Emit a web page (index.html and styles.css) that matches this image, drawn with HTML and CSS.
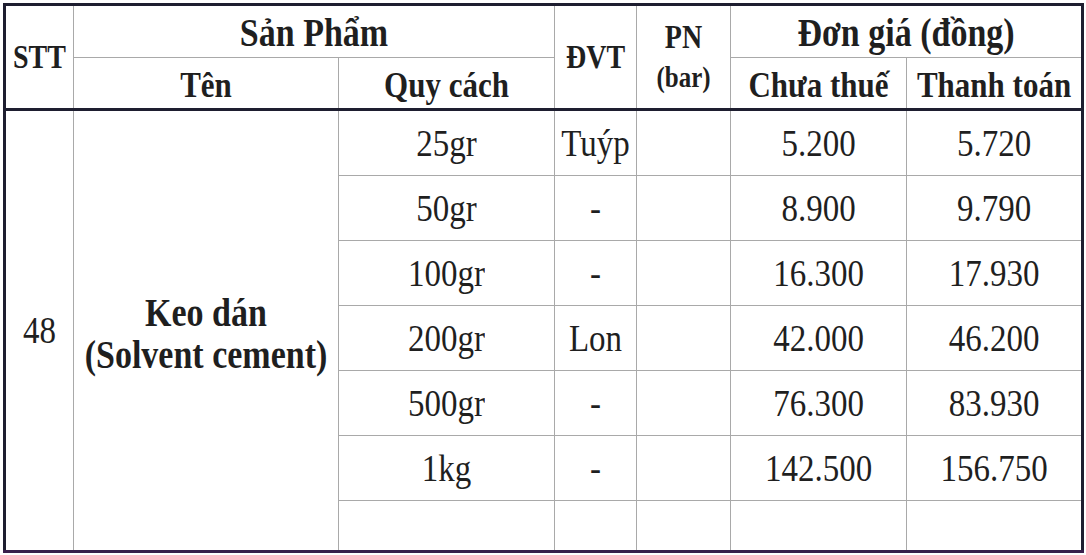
FILE: index.html
```html
<!DOCTYPE html>
<html lang="vi">
<head>
<meta charset="utf-8">
<title>Bảng giá Keo dán</title>
<link rel="stylesheet" href="styles.css">
</head>
<body>
<div class="sheet">
<table class="price">
  <colgroup>
    <col class="c-stt"><col class="c-ten"><col class="c-qc"><col class="c-dvt"><col class="c-pn"><col class="c-gia"><col class="c-gia">
  </colgroup>
  <thead>
    <tr class="h1">
      <th rowspan="2" class="small thick-b"><span class="t">STT</span></th>
      <th colspan="2"><span class="t">Sản Phẩm</span></th>
      <th rowspan="2" class="small thick-b"><span class="t">ĐVT</span></th>
      <th rowspan="2" class="small thick-b"><span class="t pn">PN<br><span class="bar">(bar)</span></span></th>
      <th colspan="2"><span class="t">Đơn giá (đồng)</span></th>
    </tr>
    <tr class="h2">
      <th class="thick-b"><span class="t">Tên</span></th>
      <th class="thick-b"><span class="t">Quy cách</span></th>
      <th class="thick-b"><span class="t">Chưa thuế</span></th>
      <th class="thick-b"><span class="t">Thanh toán</span></th>
    </tr>
  </thead>
  <tbody>
    <tr>
      <td rowspan="7"><span class="t">48</span></td>
      <td rowspan="7" class="name"><span class="t">Keo dán<br>(Solvent cement)</span></td>
      <td><span class="t">25gr</span></td>
      <td><span class="t">Tuýp</span></td>
      <td></td>
      <td><span class="t">5.200</span></td>
      <td><span class="t">5.720</span></td>
    </tr>
    <tr>
      <td><span class="t">50gr</span></td>
      <td><span class="t">-</span></td>
      <td></td>
      <td><span class="t">8.900</span></td>
      <td><span class="t">9.790</span></td>
    </tr>
    <tr>
      <td><span class="t">100gr</span></td>
      <td><span class="t">-</span></td>
      <td></td>
      <td><span class="t">16.300</span></td>
      <td><span class="t">17.930</span></td>
    </tr>
    <tr>
      <td><span class="t">200gr</span></td>
      <td><span class="t">Lon</span></td>
      <td></td>
      <td><span class="t">42.000</span></td>
      <td><span class="t">46.200</span></td>
    </tr>
    <tr>
      <td><span class="t">500gr</span></td>
      <td><span class="t">-</span></td>
      <td></td>
      <td><span class="t">76.300</span></td>
      <td><span class="t">83.930</span></td>
    </tr>
    <tr>
      <td><span class="t">1kg</span></td>
      <td><span class="t">-</span></td>
      <td></td>
      <td><span class="t">142.500</span></td>
      <td><span class="t">156.750</span></td>
    </tr>
    <tr class="last">
      <td></td>
      <td></td>
      <td></td>
      <td></td>
      <td></td>
    </tr>
  </tbody>
</table>
</div>
</body>
</html>
```
FILE: styles.css
```css
html, body {
  margin: 0;
  padding: 0;
  background: #ffffff;
}

.sheet {
  padding: 3px 0 0 3px;
}

.price {
  border-collapse: collapse;
  table-layout: fixed;
  width: 1080px;
  font-family: "Liberation Serif", "Times New Roman", serif;
  color: #1f1f1f;
  border-top: 3px solid #1e1e30;
  border-left: 3px solid #1e1e30;
  border-right: 3px solid #1e1e30;
  border-bottom: 3px solid #3a1f4c;
}

.c-stt { width: 69px; }
.c-ten { width: 265px; }
.c-qc { width: 216px; }
.c-dvt { width: 82px; }
.c-pn { width: 94px; }
.c-gia { width: 176px; }

.price th,
.price td {
  border: 1px solid #a9a9a9;
  padding: 0;
  text-align: center;
  vertical-align: middle;
  overflow: hidden;
}

.price th {
  font-weight: bold;
}

.h1 th {
  height: 48px;
  font-size: 34px;
  padding-top: 3px;
}

.h2 th {
  height: 47px;
  font-size: 31px;
  padding-top: 3px;
}

.price th.small {
  font-size: 28px;
  padding-top: 0;
}

.price th.thick-b {
  border-bottom: 3px solid #1e1e30;
}

.t {
  display: inline-block;
  line-height: 1;
  transform: scaleY(1.17);
}

.pn {
  line-height: 34px;
}

.bar {
  font-size: 25px;
}

.price td {
  height: 64px;
  font-size: 33px;
}

.price tr.last td {
  height: 49px;
}

.price td.name {
  font-weight: bold;
  font-size: 34px;
  padding-top: 8px;
}

.price td.name .t {
  line-height: 36px;
}
```
